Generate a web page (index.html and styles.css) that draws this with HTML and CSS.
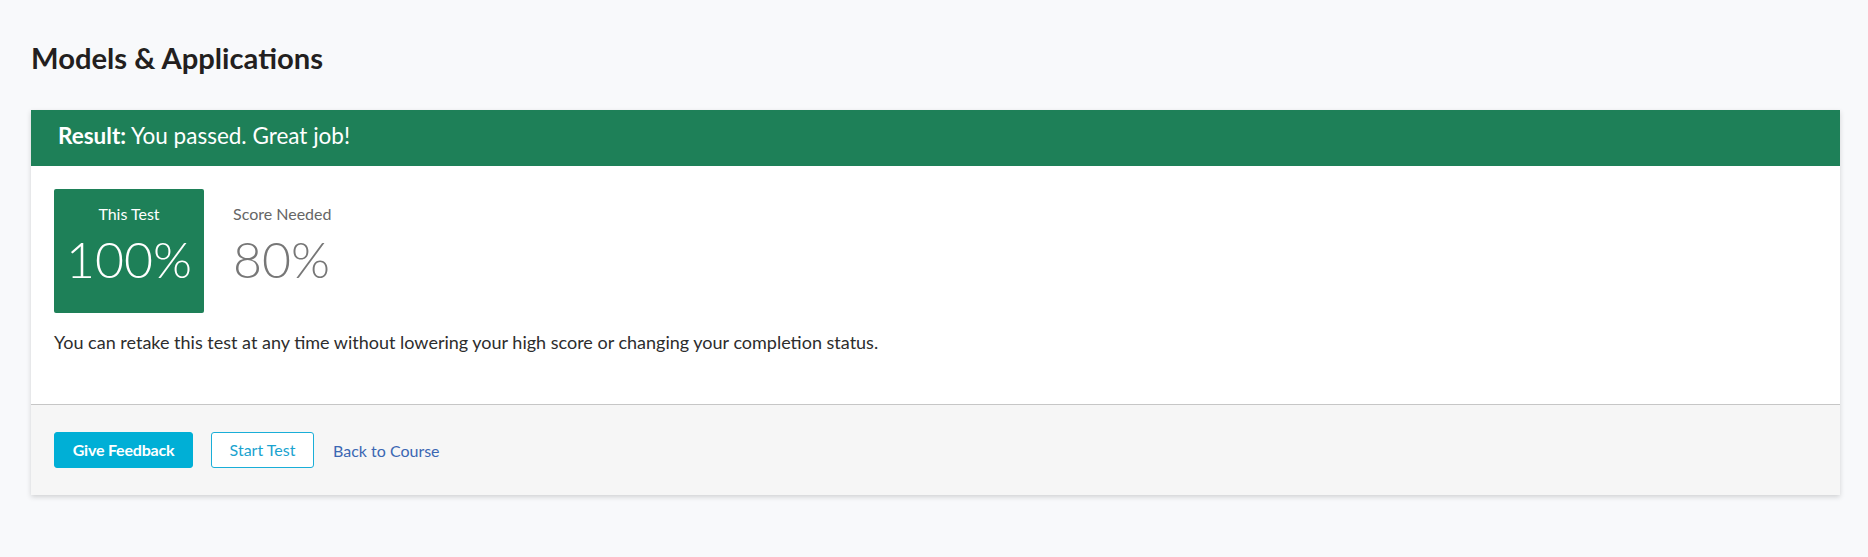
FILE: index.html
```html
<!DOCTYPE html>
<html lang="en">
<head>
<meta charset="utf-8">
<title>Models &amp; Applications</title>
<link rel="stylesheet" href="styles.css">
</head>
<body>
<main class="page">
  <h1 class="title">Models &amp; Applications</h1>
  <section class="card">
    <header class="result-bar"><strong>Result:</strong> You passed. Great job!</header>
    <div class="card-body">
      <div class="scores">
        <div class="score score-mine">
          <div class="score-label">This Test</div>
          <div class="score-value">100%</div>
        </div>
        <div class="score score-needed">
          <div class="score-label">Score Needed</div>
          <div class="score-value">80%</div>
        </div>
      </div>
      <p class="note">You can retake this test at any time without lowering your high score or changing your completion status.</p>
    </div>
    <footer class="card-footer">
      <button class="btn btn-primary" type="button">Give Feedback</button>
      <button class="btn btn-outline" type="button">Start Test</button>
      <a class="link" href="#">Back to Course</a>
    </footer>
  </section>
</main>
</body>
</html>
```
FILE: styles.css
```css
* { box-sizing: border-box; }
html, body { margin: 0; padding: 0; }
body {
  background: #f8f9fb;
  font-family: Lato, "Open Sans", "Liberation Sans", sans-serif;
  color: #2d2d2d;
}
.page {
  padding: 41px 28px 40px 31px;
}
.title {
  margin: 0 0 35px 0;
  font-size: 29.2px;
  line-height: 34px;
  font-weight: 700;
  color: #231f20;
}
.card {
  background: #fff;
  box-shadow: 0 2px 5px rgba(0, 0, 0, 0.16);
}
.result-bar {
  background: #1e8058;
  color: #fff;
  font-size: 22.5px;
  line-height: 30px;
  padding: 11px 27px 15px;
}
.result-bar strong { font-weight: 700; }
.card-body {
  padding: 23px 23px 50px;
  border-bottom: 1px solid #c6c6c6;
}
.scores {
  display: flex;
  gap: 29px;
}
.score {
  height: 124px;
  padding-top: 15px;
}
.score-mine {
  width: 150px;
  background: #1e8058;
  border-radius: 2px;
  color: #fff;
  text-align: center;
}
.score-label {
  font-size: 16px;
  line-height: 20px;
}
.score-value {
  margin-top: 10px;
  font-size: 50px;
  line-height: 50px;
  font-weight: 300;
}
.score-needed .score-label { color: #666; }
.score-needed .score-value { color: #777; }
.note {
  margin: 17px 0 0;
  font-size: 18px;
  line-height: 24px;
  color: #2d2d2d;
}
.card-footer {
  background: #f6f6f6;
  display: flex;
  align-items: center;
  padding: 27px 23px 27px;
}
.btn {
  height: 36px;
  padding: 0;
  font-family: inherit;
  font-size: 16px;
  line-height: 20px;
  white-space: nowrap;
  text-align: center;
  border-radius: 3px;
  cursor: pointer;
}
.btn-primary {
  width: 139px;
  background: #00afd6;
  border: 1px solid #00afd6;
  color: #fff;
  font-weight: 700;
  letter-spacing: -0.2px;
}
.btn-outline {
  width: 103px;
  margin-left: 18px;
  background: #fff;
  border: 1px solid #1aaed8;
  color: #1aa3cf;
}
.link {
  margin-left: 19px;
  font-size: 16px;
  color: #3b67b3;
  text-decoration: none;
}
```
